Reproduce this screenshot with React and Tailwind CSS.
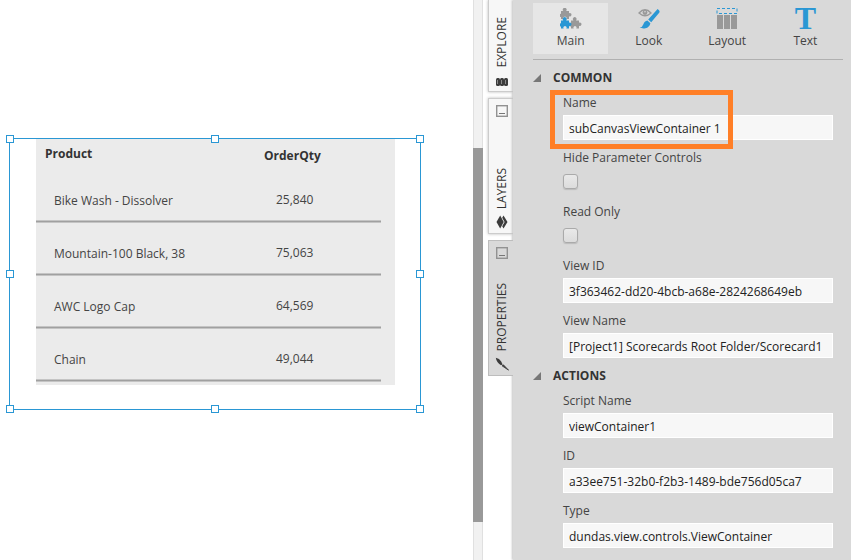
import { clsx } from "clsx";

const SCORES = [
    { product: "Bike Wash - Dissolver", qty: "25,840" },
    { product: "Mountain-100 Black, 38", qty: "75,063" },
    { product: "AWC Logo Cap", qty: "64,569" },
    { product: "Chain", qty: "49,044" },
];

// Resize grips around the selected element
const HANDLES = [
    "-left-1 -top-1",
    "left-1/2 -translate-x-1/2 -top-1",
    "-right-1 -top-1",
    "-left-1 top-1/2 -translate-y-1/2",
    "-right-1 top-1/2 -translate-y-1/2",
    "-left-1 -bottom-1",
    "left-1/2 -translate-x-1/2 -bottom-1",
    "-right-1 -bottom-1",
];

/* ---------- Icons ---------- */

function PuzzlePiece({ x, y, fill }) {
    return (
        <path
            transform={`translate(${x} ${y})`}
            fill={fill}
            d="M1 3H3.4A1.9 1.9 0 1 1 6 3H9V5.300A1.700 1.700 0 1 1 9 8.300V11H6.300A1.600 1.600 0 1 0 3.700 11H1V8.800A1.500 1.500 0 1 1 1 6Z"
        />
    );
}

function MainIcon() {
    return (
        <svg width="22" height="22" viewBox="0 0 22 22" className="shrink-0" aria-hidden="true">
            <PuzzlePiece x={0} y={0} fill="#999999" />
            <PuzzlePiece x={10} y={9.5} fill="#999999" />
            <PuzzlePiece x={0} y={9.5} fill="#2a97d4" />
        </svg>
    );
}

function LookIcon() {
    return (
        <svg width="22" height="22" viewBox="0 0 22 22" className="shrink-0" aria-hidden="true">
            <path d="M1 5Q7 -1.5 13 5Q7 10.5 1 5Z" fill="none" stroke="#999999" strokeWidth="1.3" />
            <circle cx="7" cy="4.5" r="2.4" fill="#999999" />
            <circle cx="7" cy="3.8" r="0.8" fill="#d9d9d9" />
            <path d="M21 2.2L19.6 1L10.2 11.4L13.2 14.2L21.4 4.4Q22 3 21 2.2Z" fill="#2a97d4" />
            <path d="M9.4 12.4L12.4 15.2Q11.4 19.4 7.4 20.2Q4.6 20.8 1.6 19.6Q4.6 19 5.4 16.2Q6.4 12.8 9.4 12.4Z" fill="#2a97d4" />
        </svg>
    );
}

function LayoutIcon() {
    return (
        <svg width="22" height="22" viewBox="0 0 22 22" className="shrink-0" aria-hidden="true">
            <rect x="1" y="0.5" width="20" height="5" fill="none" stroke="#2a97d4" strokeDasharray="3 2" />
            <path d="M1 7h6v14H1zM8 7h6v14H8zM15 7h6v14h-6z" fill="#999999" />
        </svg>
    );
}

function TextIcon() {
    return (
        <span
            aria-hidden="true"
            className="h-[22px] font-['Liberation_Serif',serif] text-[32px] leading-[20px] font-bold text-[#2a97d4]"
        >
            T
        </span>
    );
}

function DockIcon() {
    return (
        <svg width="12" height="12" viewBox="0 0 12 12" className="shrink-0" aria-hidden="true">
            <rect x="0.7" y="0.7" width="10.600" height="10.600" fill="none" stroke="#929292" strokeWidth="1.400" />
            <path d="M3 8.500h6" stroke="#777777" />
        </svg>
    );
}

function ExploreIcon() {
    return (
        <svg width="12" height="10" viewBox="0 0 12 10" aria-hidden="true">
            <rect x="0" y="1" width="4" height="8" rx="1.500" fill="#3c3c3c" />
            <rect x="4" y="1" width="4" height="8" rx="1.500" fill="#3c3c3c" />
            <rect x="8" y="1" width="4" height="8" rx="1.500" fill="#3c3c3c" />
            <path d="M1.500 3v4M5.500 3v4M9.500 3v4" stroke="#a0a0a0" strokeWidth="0.800" />
        </svg>
    );
}

function LayersIcon() {
    return (
        <svg width="12" height="14" viewBox="0 0 12 14" aria-hidden="true">
            <path d="M4.200 0.500L7.700 7L4.200 13.500L0.500 7Z" fill="#3c3c3c" />
            <path d="M7.500 0.500L11.500 7L7.500 13.500L6.200 11.200L8.600 7L6.200 2.800Z" fill="#3c3c3c" />
        </svg>
    );
}

function BrushIcon() {
    return (
        <svg width="14" height="14" viewBox="0 0 14 14" aria-hidden="true">
            <path d="M0.800 0.800Q4.500 1.500 6.200 4.600L7.600 7.600L6 8.200Q1.500 5.500 0.800 0.800Z" fill="#3c3c3c" />
            <path d="M7 8.800L8.400 7.800L13.600 13.200Z" fill="#3c3c3c" stroke="#3c3c3c" strokeWidth="0.800" />
        </svg>
    );
}

/* ---------- Canvas ---------- */

function Scorecard() {
    return (
        <div className="ml-[26px] w-[359px] bg-[#ebebeb] pb-[3px]">
            <table className="w-[345px] table-fixed border-separate border-spacing-0 text-left">
                <thead>
                    <tr className="h-[31px] align-top leading-5 font-bold text-[#333333]">
                        <th className="w-[228px] pt-[5px] pl-[9px]">Product</th>
                        <th className="pt-[7px]">OrderQty</th>
                    </tr>
                </thead>
                <tbody>
                    {SCORES.map(({ product, qty }) => (
                        <tr key={product} className="h-[53px] align-top leading-5">
                            <td className="border-b border-[#c4c4c4] pt-[21px] pl-[18px] shadow-[inset_0_-1px_0_#a0a0a0,inset_0_-2px_0_#c4c4c4]">
                                {product}
                            </td>
                            <td className="border-b border-[#c4c4c4] pt-5 pl-3 shadow-[inset_0_-1px_0_#a0a0a0,inset_0_-2px_0_#c4c4c4]">
                                {qty}
                            </td>
                        </tr>
                    ))}
                </tbody>
            </table>
        </div>
    );
}

function Canvas() {
    return (
        <main className="min-w-0 flex-1 pt-[138px] pl-[9px]">
            <div className="relative h-[272px] w-[412px] border border-[#2a97d4]">
                <Scorecard />
                {HANDLES.map((place) => (
                    <span
                        key={place}
                        className={clsx("absolute size-2 border border-[#2a97d4] bg-white", place)}
                    />
                ))}
            </div>
        </main>
    );
}

function CanvasScrollbar() {
    return (
        <div className="flex w-[10px] shrink-0 flex-col border-x border-[#e0e0e0] bg-[#f1f1f1]">
            <div className="grow-[148]" />
            <div className="-mx-px grow-[374] bg-[#999999]" />
            <div className="grow-[38]" />
        </div>
    );
}

/* ---------- Docked tabs ---------- */

function DockTab({ label, icon, dock = true, active = false, className }) {
    return (
        <button
            type="button"
            className={clsx(
                "flex w-full flex-col items-center border-b border-l pl-px",
                active
                    ? "relative z-10 border-t border-[#bdbdbd] bg-[#d9d9d9]"
                    : "border-[#cccccc] bg-[#f7f7f7] shadow-[0_0_3px_#bbbbbb]",
                className
            )}
        >
            {dock && <DockIcon />}
            <span className="mt-auto rotate-180 leading-4 text-[#333333] [writing-mode:vertical-rl]">
                {label}
            </span>
            <span className="flex h-6 items-end justify-center pb-1">{icon}</span>
        </button>
    );
}

function DockTabs() {
    return (
        <nav className="ml-[5px] flex w-[25px] shrink-0 flex-col gap-[6px]">
            <DockTab label="EXPLORE" icon={<ExploreIcon />} dock={false} className="h-[92px]" />
            <DockTab label="LAYERS" icon={<LayersIcon />} className="h-[136px] border-t pt-[6px]" />
            <DockTab label="PROPERTIES" icon={<BrushIcon />} active className="h-[136px] pt-[6px]" />
        </nav>
    );
}

/* ---------- Properties panel ---------- */

function PanelTab({ label, icon, active = false }) {
    return (
        <button
            type="button"
            className={clsx("flex h-[51px] flex-col items-center pt-[5px]", active && "bg-[#e6e6e6]")}
        >
            {icon}
            <span className="mt-px leading-5">{label}</span>
        </button>
    );
}

function Section({ title, children }) {
    return (
        <section>
            <h2 className="flex items-center gap-3 leading-5 font-bold text-[#333333]">
                <svg width="8" height="8" viewBox="0 0 8 8" aria-hidden="true">
                    <path d="M8 0V8H0Z" fill="#777777" />
                </svg>
                {title}
            </h2>
            <div className="mt-[5px] flex flex-col gap-2 pr-[10px] pl-[30px]">{children}</div>
        </section>
    );
}

function TextField({ id, label, value, highlighted = false }) {
    return (
        <div className="relative flex flex-col gap-[2px]">
            <label htmlFor={id} className="leading-5">
                {label}
            </label>
            <input
                id={id}
                type="text"
                defaultValue={value}
                className="h-[25px] w-full border border-white bg-[#f7f7f7] px-[5px] pt-[2px] text-[#222222]"
            />
            {highlighted && (
                <span className="pointer-events-none absolute -top-[3px] -left-[13px] h-[59px] w-[183px] border-[5px] border-[#ff7f27]" />
            )}
        </div>
    );
}

function CheckField({ id, label }) {
    return (
        <div className="flex flex-col gap-[2px]">
            <label htmlFor={id} className="leading-5">
                {label}
            </label>
            <span className="flex h-6 pt-1">
                <input
                    id={id}
                    type="checkbox"
                    className="size-[15px] appearance-none rounded-[3px] border border-[#aaaaaa] bg-linear-to-b from-[#e9e9e9] to-[#dcdcdc] shadow-[0_1px_1px_#bbbbbb]"
                />
            </span>
        </div>
    );
}

function PropertiesPanel() {
    return (
        <aside className="w-[338px] shrink-0 bg-[#d9d9d9] pt-[3px] pr-2 pb-3 pl-5 shadow-[-1px_0_2px_#c4c4c4]">
            <div className="grid grid-cols-4 gap-[3px] border-b border-[#b0b0b0] pb-[5px]">
                <PanelTab label="Main" icon={<MainIcon />} active />
                <PanelTab label="Look" icon={<LookIcon />} />
                <PanelTab label="Layout" icon={<LayoutIcon />} />
                <PanelTab label="Text" icon={<TextIcon />} />
            </div>
            <div className="mt-2 flex flex-col gap-2">
                <Section title="COMMON">
                    <TextField id="name" label="Name" value="subCanvasViewContainer 1" highlighted />
                    <CheckField id="hide-params" label="Hide Parameter Controls" />
                    <CheckField id="read-only" label="Read Only" />
                    <TextField id="view-id" label="View ID" value="3f363462-dd20-4bcb-a68e-2824268649eb" />
                    <TextField
                        id="view-name"
                        label="View Name"
                        value="[Project1] Scorecards Root Folder/Scorecard1"
                    />
                </Section>
                <Section title="ACTIONS">
                    <TextField id="script-name" label="Script Name" value="viewContainer1" />
                    <TextField id="id" label="ID" value="a33ee751-32b0-f2b3-1489-bde756d05ca7" />
                    <TextField id="type" label="Type" value="dundas.view.controls.ViewContainer" />
                </Section>
            </div>
        </aside>
    );
}

export default function App() {
    return (
        <div className="flex min-h-screen bg-white font-['Open_Sans','Noto_Sans',sans-serif] text-[12px] text-[#444444]">
            <Canvas />
            <CanvasScrollbar />
            <DockTabs />
            <PropertiesPanel />
        </div>
    );
}
